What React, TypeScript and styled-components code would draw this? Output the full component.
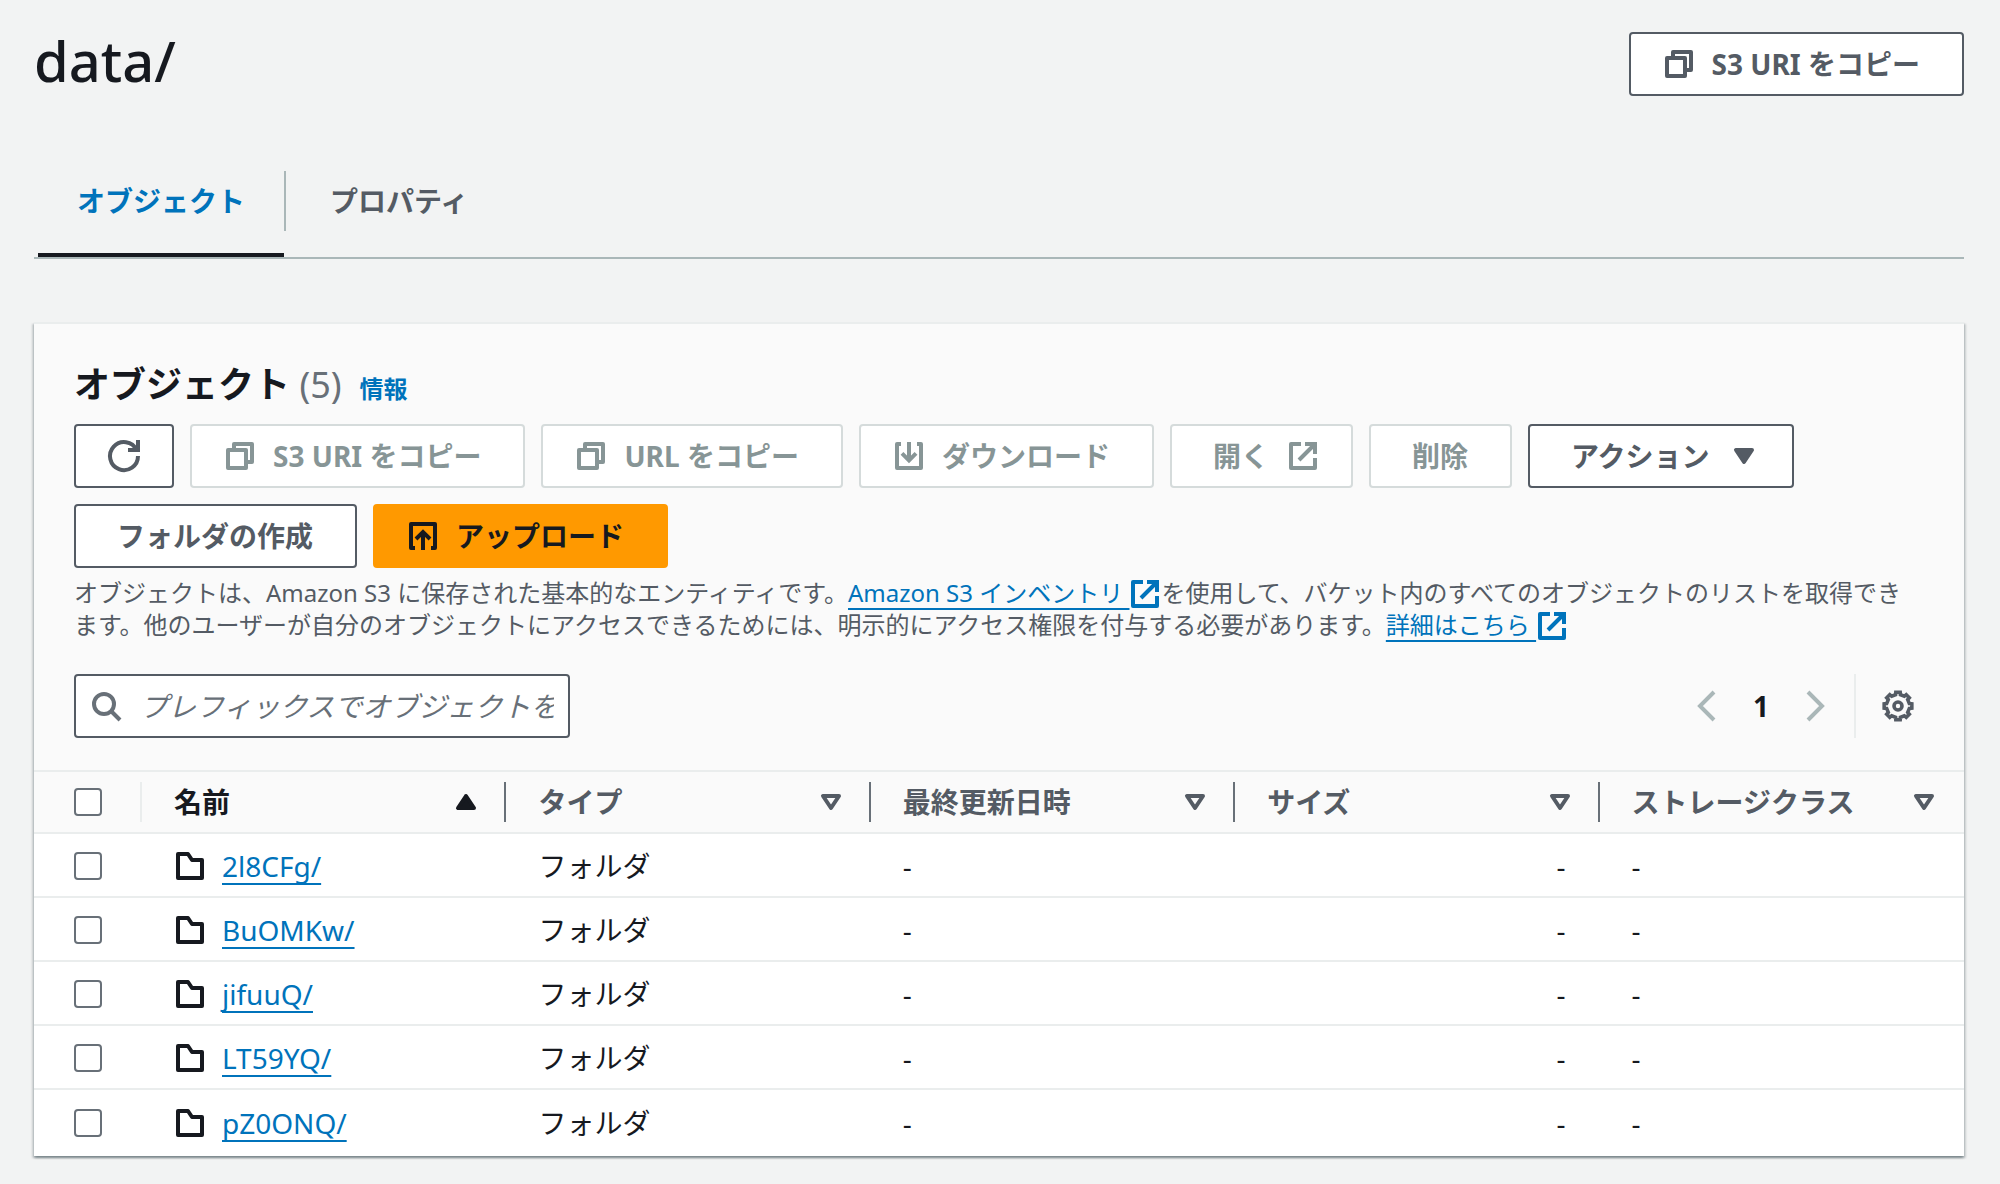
import React from "react";
import styled, { createGlobalStyle, css } from "styled-components";

const color = {
  page: "#f2f3f3",
  panel: "#fafafa",
  line: "#eaeded",
  rule: "#aab7b8",
  border: "#545b64",
  text: "#16191f",
  muted: "#545b64",
  faint: "#687078",
  disabled: "#879596",
  disabledLine: "#d5dbdb",
  link: "#0073bb",
  primary: "#ff9900",
};

const GlobalStyle = createGlobalStyle`
  *, *::before, *::after { box-sizing: border-box; }
  body {
    margin: 0;
    background: ${color.page};
    color: ${color.text};
    font-family: "Noto Sans", "Noto Sans CJK JP", sans-serif;
    font-size: 28px;
    line-height: 44px;
  }
  button, input { font: inherit; color: inherit; }
  h1, h2, p { margin: 0; }
`;

/* ---------- icons ---------- */

const Svg = styled.svg`
  display: block;
  flex: none;
  width: 32px;
  height: 32px;
  overflow: visible;
  fill: none;
  stroke: currentColor;
  stroke-width: 2;
`;

const gearOutline = Array.from({ length: 8 }, (_, i) => {
  const corner = (radius: number, offset: number) => {
    const angle = ((i * 45 + offset) * Math.PI) / 180;
    return `${(8 + radius * Math.cos(angle)).toFixed(2)},${(8 + radius * Math.sin(angle)).toFixed(2)}`;
  };
  return [corner(5.8, -12), corner(7, -9), corner(7, 9), corner(5.8, 12)].join(" ");
}).join(" ");

const shapes = {
  copy: (
    <g strokeLinejoin="round">
      <path d="M2 5h9v9H2z" />
      <path d="M5 5V2h9v9h-3" />
    </g>
  ),
  refresh: (
    <>
      <path d="M10 5h5V0" />
      <path d="M15 8a7 7 0 1 1-.7-3" />
    </>
  ),
  download: (
    <>
      <path strokeLinejoin="round" d="M4 2H2v12h12V2h-2" />
      <path d="M8 1v9M4.500 6.700 8 10.200l3.500-3.500" />
    </>
  ),
  upload: (
    <>
      <path strokeLinejoin="round" d="M4 14H2V2h12v12h-2" />
      <path d="M8 15V6M4.500 9.500 8 6l3.500 3.500" />
    </>
  ),
  external: (
    <>
      <path strokeLinejoin="round" d="M14 9v5H2V2h5" />
      <path d="M9 2h5v5M14 2 6 10" />
    </>
  ),
  folder: <path strokeLinejoin="round" d="M14 14H2V2h5l2 3h5z" />,
  search: (
    <>
      <circle cx="7" cy="7" r="5" />
      <path d="m15 15-4.500-4.500" />
    </>
  ),
  left: <path d="M12 1 5 8l7 7" />,
  right: <path d="m4 1 7 7-7 7" />,
  gear: (
    <g strokeWidth="1.800">
      <polygon points={gearOutline} />
      <circle cx="8" cy="8" r="2" />
    </g>
  ),
  caretDown: <path fill="currentColor" strokeLinejoin="round" d="M4 5h8l-4 6z" />,
  caretUp: <path fill="currentColor" strokeLinejoin="round" d="M4 11h8L8 5z" />,
  caretOutline: <path strokeLinejoin="round" d="M4 5h8l-4 6z" />,
};

type IconName = keyof typeof shapes;

const Icon = ({ name }: { name: IconName }) => (
  <Svg viewBox="0 0 16 16" aria-hidden="true">
    {shapes[name]}
  </Svg>
);

/* ---------- page head ---------- */

const Page = styled.main`
  padding: 28px 36px 28px 34px;
`;

const PageHead = styled.header`
  display: flex;
  justify-content: space-between;
  align-items: flex-start;
`;

const PageTitle = styled.h1`
  font-size: 56px;
  font-weight: 500;
  line-height: 64px;
`;

const Actions = styled.div`
  padding-top: 4px;
`;

const Button = styled.button<{ $primary?: boolean; $square?: boolean }>`
  display: inline-flex;
  align-items: center;
  justify-content: center;
  gap: 16px;
  height: 64px;
  padding: 0 ${(p) => (p.$square ? 32 : 40)}px;
  border: 2px solid ${color.border};
  border-radius: 4px;
  background: #fff;
  color: ${color.muted};
  font-weight: 700;
  white-space: nowrap;
  cursor: pointer;

  ${(p) =>
    p.$primary &&
    css`
      border-color: ${color.primary};
      background: ${color.primary};
      color: ${color.text};
    `}

  &:disabled {
    border-color: ${color.disabledLine};
    color: ${color.disabled};
    cursor: default;
  }

  & > svg:first-child:not(:only-child) {
    margin-left: -8px;
  }

  & > svg:last-child:not(:only-child) {
    margin-right: -8px;
  }
`;

const Label = styled.span`
  padding: 0 2px 0 1px;
`;

/* ---------- tabs ---------- */

const TabList = styled.div`
  display: flex;
  margin-top: 48px;
  padding: 0 4px;
  border-bottom: 2px solid ${color.rule};
`;

const Tab = styled.button<{ $active?: boolean }>`
  height: 113px;
  padding: 4px 0 0;
  border: 0;
  border-bottom: 4px solid ${(p) => (p.$active ? color.text : "transparent")};
  background: none;
  color: ${(p) => (p.$active ? color.link : color.muted)};
  font-weight: 700;
  cursor: pointer;

  & > span {
    display: block;
    padding: 8px 39px;
  }

  &:not(:first-child) > span {
    padding-left: 44px;
    border-left: 2px solid ${color.rule};
  }
`;

/* ---------- objects panel ---------- */

const Panel = styled.section`
  margin-top: 63px;
  border-top: 2px solid ${color.line};
  background: #fff;
  box-shadow:
    0 2px 2px 0 rgba(0, 28, 36, 0.3),
    2px 2px 2px 0 rgba(0, 28, 36, 0.15),
    -2px 2px 2px 0 rgba(0, 28, 36, 0.15);
`;

const PanelHead = styled.div`
  padding: 38px 40px 32px;
  border-bottom: 2px solid ${color.line};
  background: ${color.panel};
`;

const Heading = styled.div`
  display: flex;
  align-items: baseline;
  gap: 18px;
  margin-bottom: 16px;

  h2 {
    font-size: 36px;
    line-height: 46px;
  }
`;

const Count = styled.span`
  color: ${color.faint};
  font-weight: 400;
`;

const InfoLink = styled.a`
  color: ${color.link};
  font-size: 24px;
  font-weight: 700;
  line-height: 32px;
  text-decoration: none;
`;

const Toolbar = styled.div`
  display: flex;
  flex-wrap: wrap;
  gap: 16px;
  max-width: 1760px;
`;

const Description = styled.p`
  margin-top: 9px;
  color: ${color.muted};
  font-size: 24px;
  line-height: 32px;

  svg {
    display: inline-block;
    vertical-align: middle;
    margin-top: -8px;
    margin-bottom: -4px;
  }
`;

const TextLink = styled.a`
  color: ${color.link};
  text-decoration: none;
`;

const underline = css`
  text-decoration: underline;
  text-decoration-thickness: 2px;
  text-decoration-skip-ink: none;
  text-underline-offset: 6px;
`;

const Underlined = styled.span`
  white-space: pre;
  ${underline}
`;

const Filters = styled.div`
  display: flex;
  justify-content: space-between;
  align-items: center;
  margin-top: 33px;
`;

const SearchBox = styled.label`
  display: flex;
  align-items: center;
  gap: 18px;
  width: 496px;
  height: 64px;
  padding: 0 14px;
  border: 2px solid ${color.border};
  border-radius: 4px;
  background: #fff;
  color: ${color.faint};

  input {
    flex: 1;
    min-width: 0;
    height: 44px;
    padding: 0;
    border: 0;
    outline: 0;
    background: none;
  }

  input::placeholder {
    color: ${color.faint};
    font-style: italic;
    opacity: 1;
  }
`;

const Pager = styled.nav`
  display: flex;
  align-items: center;
  height: 64px;
`;

const IconButton = styled.button`
  display: block;
  padding: 0;
  border: 0;
  background: none;
  color: ${color.muted};
  cursor: pointer;

  &:disabled {
    color: ${color.rule};
    cursor: default;
  }
`;

const PageNumber = styled.button`
  width: 78px;
  padding: 0;
  border: 0;
  background: none;
  font-size: 28px;
  font-weight: 700;
`;

const Preferences = styled.div`
  display: flex;
  align-items: center;
  height: 64px;
  margin-left: 22px;
  padding: 0 10px 0 26px;
  border-left: 2px solid ${color.line};
`;

/* ---------- table ---------- */

const Table = styled.table`
  width: 100%;
  table-layout: fixed;
  border-collapse: separate;
  border-spacing: 0;
  text-align: left;
`;

const SelectCol = styled.col`
  width: 108px;
`;

const HeadCell = styled.th`
  height: 62px;
  padding: 0;
  border-bottom: 2px solid ${color.line};
  background: ${color.panel};
`;

const HeadInner = styled.div<{ $select?: boolean }>`
  display: flex;
  align-items: center;
  height: 40px;
  padding-left: ${(p) => (p.$select ? 40 : 32)}px;
  border-right: 2px solid ${(p) => (p.$select ? color.line : color.faint)};

  th:last-child > & {
    border-color: transparent;
  }
`;

const SortButton = styled.button<{ $sorted?: boolean }>`
  flex: 1;
  display: flex;
  justify-content: space-between;
  align-items: center;
  height: 40px;
  padding: 0 22px 0 0;
  border: 0;
  background: none;
  color: ${(p) => (p.$sorted ? color.text : color.muted)};
  font-weight: 700;
  text-align: left;
  cursor: pointer;
`;

const Cell = styled.td<{ $select?: boolean; $end?: boolean }>`
  height: 64px;
  padding: 2px 34px 0 ${(p) => (p.$select ? 40 : 32)}px;
  border-bottom: 2px solid ${color.line};
  text-align: ${(p) => (p.$end ? "right" : "left")};

  tr:last-child > & {
    height: 66px;
    border-color: transparent;
  }
`;

const Checkbox = styled.input`
  display: block;
  appearance: none;
  width: 28px;
  height: 28px;
  margin: 0;
  border: 2px solid ${color.faint};
  border-radius: 4px;
  background: #fff;

  &:checked {
    border-color: ${color.link};
    background: ${color.link};
  }
`;

const FileName = styled.div`
  display: flex;
  align-items: center;
  gap: 16px;
`;

const FileLink = styled(TextLink)`
  ${underline}
`;

const columns: { label: string; sorted?: boolean }[] = [
  { label: "名前", sorted: true },
  { label: "タイプ" },
  { label: "最終更新日時" },
  { label: "サイズ" },
  { label: "ストレージクラス" },
];

const folders = ["2l8CFg/", "BuOMKw/", "jifuuQ/", "LT59YQ/", "pZ0ONQ/"];

const ObjectTable = () => (
  <Table>
    <colgroup>
      <SelectCol />
      {columns.map((c) => (
        <col key={c.label} />
      ))}
    </colgroup>
    <thead>
      <tr>
        <HeadCell scope="col">
          <HeadInner $select>
            <Checkbox type="checkbox" aria-label="すべて選択" />
          </HeadInner>
        </HeadCell>
        {columns.map((c) => (
          <HeadCell key={c.label} scope="col" aria-sort={c.sorted ? "ascending" : undefined}>
            <HeadInner>
              <SortButton type="button" $sorted={c.sorted}>
                {c.label}
                <Icon name={c.sorted ? "caretUp" : "caretOutline"} />
              </SortButton>
            </HeadInner>
          </HeadCell>
        ))}
      </tr>
    </thead>
    <tbody>
      {folders.map((name) => (
        <tr key={name}>
          <Cell $select>
            <Checkbox type="checkbox" aria-label={name} />
          </Cell>
          <Cell>
            <FileName>
              <Icon name="folder" />
              <FileLink href="#">{name}</FileLink>
            </FileName>
          </Cell>
          <Cell>フォルダ</Cell>
          <Cell>-</Cell>
          <Cell $end>-</Cell>
          <Cell>-</Cell>
        </tr>
      ))}
    </tbody>
  </Table>
);

export default function App() {
  return (
    <>
      <GlobalStyle />
      <Page lang="ja">
        <PageHead>
          <PageTitle>data/</PageTitle>
          <Actions>
            <Button type="button">
              <Icon name="copy" />
              <Label>S3 URI をコピー</Label>
            </Button>
          </Actions>
        </PageHead>

        <TabList role="tablist">
          <Tab type="button" role="tab" aria-selected="true" $active>
            <span>オブジェクト</span>
          </Tab>
          <Tab type="button" role="tab" aria-selected="false">
            <span>プロパティ</span>
          </Tab>
        </TabList>

        <Panel>
          <PanelHead>
            <Heading>
              <h2>
                オブジェクト <Count>(5)</Count>
              </h2>
              <InfoLink href="#">情報</InfoLink>
            </Heading>
            <Toolbar>
              <Button type="button" $square aria-label="更新">
                <Icon name="refresh" />
              </Button>
              <Button type="button" disabled>
                <Icon name="copy" />
                <Label>S3 URI をコピー</Label>
              </Button>
              <Button type="button" disabled>
                <Icon name="copy" />
                <Label>URL をコピー</Label>
              </Button>
              <Button type="button" disabled>
                <Icon name="download" />
                <Label>ダウンロード</Label>
              </Button>
              <Button type="button" disabled>
                <Label>開く</Label>
                <Icon name="external" />
              </Button>
              <Button type="button" disabled>
                <Label>削除</Label>
              </Button>
              <Button type="button">
                <Label>アクション</Label>
                <Icon name="caretDown" />
              </Button>
              <Button type="button">
                <Label>フォルダの作成</Label>
              </Button>
              <Button type="button" $primary>
                <Icon name="upload" />
                <Label>アップロード</Label>
              </Button>
            </Toolbar>
            <Description>
              オブジェクトは、Amazon S3 に保存された基本的なエンティティです。
              <TextLink href="#">
                <Underlined>Amazon S3 インベントリ </Underlined>
                <Icon name="external" />
              </TextLink>
              を使用して、バケット内のすべてのオブジェクトのリストを取得できます。他のユーザーが自分のオブジェクトにアクセスできるためには、明示的にアクセス権限を付与する必要があります。
              <TextLink href="#">
                <Underlined>詳細はこちら </Underlined>
                <Icon name="external" />
              </TextLink>
            </Description>
            <Filters>
              <SearchBox>
                <Icon name="search" />
                <input
                  type="text"
                  aria-label="オブジェクトを検索"
                  placeholder="プレフィックスでオブジェクトを検索"
                />
              </SearchBox>
              <Pager aria-label="ページ">
                <IconButton type="button" disabled aria-label="前へ">
                  <Icon name="left" />
                </IconButton>
                <PageNumber type="button">1</PageNumber>
                <IconButton type="button" disabled aria-label="次へ">
                  <Icon name="right" />
                </IconButton>
                <Preferences>
                  <IconButton type="button" aria-label="設定">
                    <Icon name="gear" />
                  </IconButton>
                </Preferences>
              </Pager>
            </Filters>
          </PanelHead>
          <ObjectTable />
        </Panel>
      </Page>
    </>
  );
}
